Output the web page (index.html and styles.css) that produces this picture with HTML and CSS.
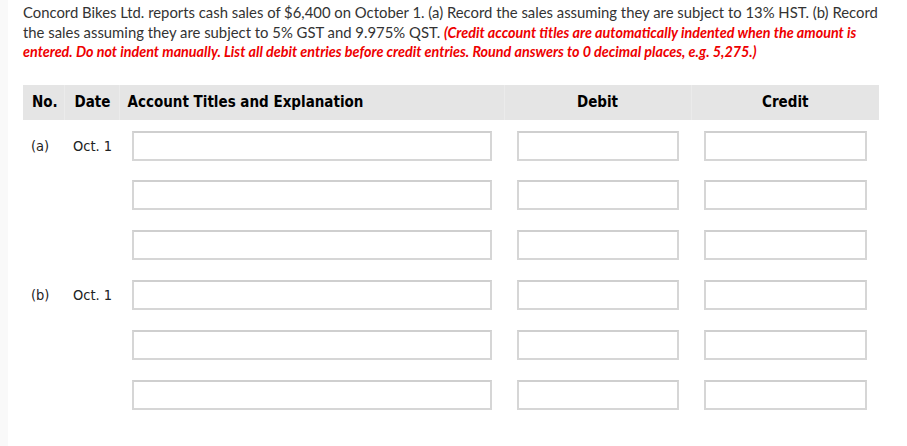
FILE: index.html
```html
<!DOCTYPE html>
<html>
<head>
<meta charset="utf-8">
<link rel="stylesheet" href="styles.css">
</head>
<body>
<div class="page">
  <p class="question">Concord Bikes Ltd. reports cash sales of $6,400 on October 1. (a) Record the sales assuming they are subject to 13% HST. (b) Record the sales assuming they are subject to 5% GST and 9.975% QST. <em class="note">(Credit account titles are automatically indented when the amount is entered. Do not indent manually. List all debit entries before credit entries. Round answers to 0 decimal places, e.g. 5,275.)</em></p>
  <table class="journal">
    <colgroup>
      <col class="w-no">
      <col class="w-date">
      <col class="w-acct">
      <col class="w-debit">
      <col class="w-credit">
    </colgroup>
    <thead>
      <tr>
        <th class="c-no">No.</th>
        <th class="c-date">Date</th>
        <th class="c-acct">Account Titles and Explanation</th>
        <th class="c-amt">Debit</th>
        <th class="c-amt">Credit</th>
      </tr>
    </thead>
    <tbody>
      <tr class="first">
        <td class="c-no">(a)</td><td class="c-date">Oct. 1</td>
        <td><div class="box"></div></td><td><div class="box"></div></td><td><div class="box"></div></td>
      </tr>
      <tr>
        <td></td><td></td>
        <td><div class="box"></div></td><td><div class="box"></div></td><td><div class="box"></div></td>
      </tr>
      <tr>
        <td></td><td></td>
        <td><div class="box"></div></td><td><div class="box"></div></td><td><div class="box"></div></td>
      </tr>
      <tr>
        <td class="c-no">(b)</td><td class="c-date">Oct. 1</td>
        <td><div class="box"></div></td><td><div class="box"></div></td><td><div class="box"></div></td>
      </tr>
      <tr>
        <td></td><td></td>
        <td><div class="box"></div></td><td><div class="box"></div></td><td><div class="box"></div></td>
      </tr>
      <tr>
        <td></td><td></td>
        <td><div class="box"></div></td><td><div class="box"></div></td><td><div class="box"></div></td>
      </tr>
    </tbody>
  </table>
</div>
</body>
</html>
```
FILE: styles.css
```css
html, body {
  margin: 0;
  padding: 0;
  background: #f9f9f9;
}
.page {
  margin-left: 8px;
  background: #ffffff;
  min-height: 446px;
  padding: 3px 14px 0 15px;
  box-sizing: border-box;
}
.question {
  margin: 0;
  font-family: Lato, "Liberation Sans", sans-serif;
  font-size: 14.85px;
  line-height: 19.5px;
  color: #333333;
}
.note {
  color: #ee0000;
  font-weight: bold;
  font-style: italic;
  font-size: 14.35px;
}
.journal {
  margin-top: 23px;
  width: 856px;
  border-collapse: collapse;
  table-layout: fixed;
  font-family: "DejaVu Sans Condensed", "DejaVu Sans", sans-serif;
  font-size: 14.5px;
  color: #222222;
}
.w-no { width: 41px; }
.w-date { width: 55px; }
.w-acct { width: 385px; }
.w-debit { width: 187px; }
.w-credit { width: 188px; }
.journal th {
  background: #e5e5e5;
  height: 35px;
  padding: 0;
  font-weight: bold;
  font-size: 15px;
  color: #000000;
  border-left: 1px solid #ebebeb;
  white-space: nowrap;
}
.journal th:first-child { border-left: none; }
.journal th.c-no { text-align: left; padding-left: 9px; }
.journal th.c-date { text-align: left; padding-left: 10px; }
.journal th.c-acct { text-align: left; padding-left: 8px; }
.journal th.c-amt { text-align: center; }
.journal td {
  padding: 10px 12px 10px 13px;
  vertical-align: middle;
}
.journal tr.first td { padding-top: 11px; padding-bottom: 9px; }
.journal tbody td.c-no,
.journal tbody td.c-date {
  padding-left: 9px;
  padding-right: 0;
  white-space: nowrap;
}
.journal tbody td.c-no { padding-left: 8px; }
.box {
  height: 30px;
  box-sizing: border-box;
  border: 2px solid #d6d6d6;
  border-top-color: #cfcfcf;
  background: #ffffff;
}
```
